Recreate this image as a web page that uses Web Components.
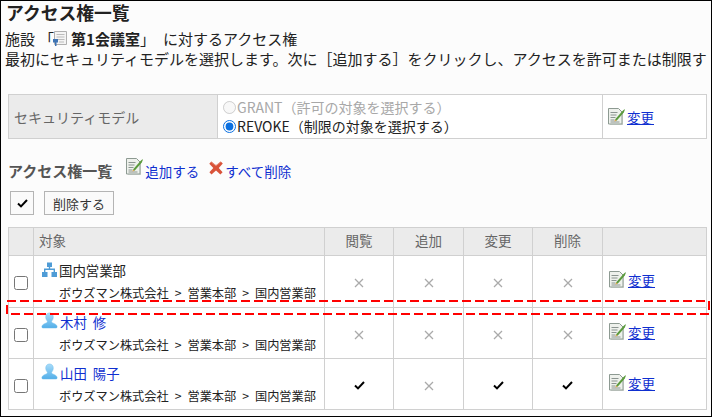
<!DOCTYPE html>
<html lang="ja">
<head>
<meta charset="utf-8">
<title>アクセス権一覧</title>
<style>
  html, body { margin: 0; padding: 0; background: #fff; }
  body { font-family: "Noto Sans CJK JP", "Noto Sans", sans-serif; }
</style>
</head>
<body>
<access-page></access-page>

<script>
const ICONS = {
  edit: `<svg width="17" height="17" viewBox="0 0 17 17">
    <path d="M.5.500h10l3.500 3.500v12H.5z" fill="#eef1ec" stroke="#8d9a92"/>
    <path d="M14.500 5v11.500H2" fill="none" stroke="#b4bcb6"/>
    <path d="M2.500 4.500h7M2.500 7h6M2.500 9.500h5M2.500 12h4M2.500 14h9" stroke="#8b9490"/>
    <path d="M7 11.500 14.200 3.200 16.400 1.200 16.900 1.800 15.800 4.600 8.600 12.800z" fill="#5a9a3c"/>
    <path d="M7 11.500 6.400 13.400 8.600 12.800z" fill="#e0a040"/>
  </svg>`,
  del: `<svg width="14" height="14" viewBox="0 0 14 14">
    <path d="M2.300.600 7 4.200 11.700.400 13.800 2.600 9.800 7 13.600 11.300 11.400 13.400 7 9.600 2.500 13.400.400 11.200 4.300 7 .300 2.700z" fill="#d9533a"/>
    <path d="M2.300 1.100 7 4.700 11.700 1" fill="none" stroke="#e99a86" stroke-width=".8"/>
  </svg>`,
  org: `<svg width="15" height="15" viewBox="0 0 15 15">
    <path d="M5 .5h5v4.500H5zM0 10h5.500v5H0zM9.500 10H15v5H9.500z" fill="#4f9cd6"/>
    <path d="M7.500 4.500v3.200M2.700 10.500V7.300h9.600v3.200" fill="none" stroke="#4f9cd6" stroke-width="1.400"/>
  </svg>`,
  user: `<svg width="17" height="17" viewBox="0 0 18 17">
    <defs><linearGradient id="u" x1="0" y1="0" x2="0" y2="1">
      <stop offset="0" stop-color="#a8dcfa"/><stop offset="1" stop-color="#52aee8"/>
    </linearGradient></defs>
    <path d="M9 .5c2.600 0 4 2 4 4.400 0 1.800-.8 3.300-1.700 4.200-.3.900 0 1.500 1 2 2 .8 4.200 1.600 4.700 3.400.2.900-.2 2-1 2H2c-.8 0-1.200-1.100-1-2 .5-1.800 2.700-2.600 4.700-3.400 1-.5 1.300-1.100 1-2C5.800 8.200 5 6.700 5 4.900 5 2.500 6.400.5 9 .5z" fill="url(#u)" stroke="#6dbdec" stroke-width=".5"/>
  </svg>`,
  room: `<svg width="15" height="16" viewBox="0 0 15 16">
    <path d="M1.500.500h12v13h-12z" fill="#f4f4f4" stroke="#b0b0b0"/>
    <path d="M3.500 3.500h8M3.500 6h8M3.500 8.500h8M6 11h5" stroke="#bcbcbc"/>
    <path d="M0 8h5v3.500H3.500V15H2v-3.500H0z" fill="#3f74b4"/>
  </svg>`,
  check: `<svg width="11" height="9" viewBox="0 0 11 9"><path d="M1 4.500 4 7.400 10 1" fill="none" stroke="#000" stroke-width="2"/></svg>`,
  cross: `<svg width="10" height="10" viewBox="0 0 10 10"><path d="M1 1 9 9M9 1 1 9" fill="none" stroke="#aaa" stroke-width="1.300"/></svg>`
};

class IconLink extends HTMLElement {
  connectedCallback() {
    const icon = this.getAttribute('icon');
    const root = this.attachShadow({ mode: 'open' });
    root.innerHTML = `
      <style>
        :host { display: inline-flex; align-items: flex-end; gap: 2px; color: #0f2fd0; font-size: 13.500px; line-height: 18px; white-space: nowrap; }
        :host([raised]) svg { margin-bottom: 5px; }
        svg { display: block; margin-bottom: 1px; }
        span.u { text-decoration: underline; }
      </style>
      ${ICONS[icon]}<span class="${this.hasAttribute('underline') ? 'u' : ''}"><slot></slot></span>
    `;
  }
}
customElements.define('icon-link', IconLink);

class SecurityModel extends HTMLElement {
  connectedCallback() {
    const root = this.attachShadow({ mode: 'open' });
    root.innerHTML = `
      <style>
        :host { display: block; margin: 0 0 0 8px; width: 699px; }
        table { width: 100%; height: 45px; border-collapse: collapse; table-layout: fixed; font-size: 14px; }
        td { border: 1px solid #d0d0d0; padding: 0; background: #fff; }
        td.label { width: 209px; background: #ebebeb; color: #666; font-size: 14px; padding-left: 5px; box-sizing: border-box; }
        td.action { width: 104px; padding: 3px 0 0 5px; box-sizing: border-box; }
        label { display: flex; align-items: center; height: 19px; color: #222; white-space: nowrap; }
        label.off { color: #a8a8a8; }
        input { margin: 0 1px 0 5px; width: 13px; height: 13px; accent-color: #0a6fe0; }
      </style>
      <table>
        <tr>
          <td class="label">セキュリティモデル</td>
          <td>
            <label class="off"><input type="radio" name="m" disabled>GRANT（許可の対象を選択する）</label>
            <label><input type="radio" name="m" checked>REVOKE（制限の対象を選択する）</label>
          </td>
          <td class="action"><icon-link icon="edit" underline>変更</icon-link></td>
        </tr>
      </table>
    `;
  }
}
customElements.define('security-model', SecurityModel);

const RIGHTS = [
  { icon: 'org', name: '国内営業部', marks: '0000', link: false },
  { icon: 'user', name: '木村 修', marks: '0000', link: true },
  { icon: 'user', name: '山田 陽子', marks: '1011', link: true }
];

class AccessTable extends HTMLElement {
  connectedCallback() {
    const filas = RIGHTS.map(r => `
      <tr>
        <td class="sel"><input type="checkbox"></td>
        <td class="target">
          <div class="name ${r.link ? 'link' : ''} ${r.icon}">${ICONS[r.icon]}<span>${r.name}</span></div>
          <div class="path">ボウズマン株式会社<i>&gt;</i>営業本部<i>&gt;</i>国内営業部</div>
        </td>
        ${[...r.marks].map(m => `<td class="mark">${m === '1' ? ICONS.check : ICONS.cross}</td>`).join('')}
        <td class="action"><icon-link icon="edit" underline>変更</icon-link></td>
      </tr>
    `).join('');

    const root = this.attachShadow({ mode: 'open' });
    root.innerHTML = `
      <style>
        :host { display: block; margin-left: 8px; width: 699px; }
        table { width: 100%; border-collapse: collapse; table-layout: fixed; font-size: 13px; background: #fff; }
        th, td { border: 1px solid #d0d0d0; padding: 0; }
        th { height: 24px; padding-bottom: 3px; background: #ebebeb; color: #666; font-weight: 400; font-size: 13.500px; }
        th.left { text-align: left; padding-left: 5px; }
        tbody tr { height: 51px; }
        tbody tr:first-child { height: 52px; }
        td.sel { text-align: center; }
        td.sel input { margin: 0; width: 14px; height: 14px; accent-color: #666; vertical-align: middle; }
        td.target { padding-left: 7px; }
        .name { display: flex; align-items: center; height: 20px; gap: 2px; font-size: 13.400px; color: #222; margin-top: -1px; word-spacing: 3px; }
        .name.org { padding-left: 1px; }
        .name.link { color: #0f2fd0; }
        .name svg { display: block; margin-top: -2px; }
        .path { font-size: 12.200px; line-height: 18px; margin: 4px 0 0 18px; color: #222; white-space: nowrap; }
        .path i { font-style: normal; margin: 0 6px; }
        td.mark { text-align: center; }
        td.mark svg { vertical-align: middle; }
        td.action { padding-left: 6px; }
      </style>
      <table>
        <colgroup>
          <col style="width:25px"><col style="width:291px"><col style="width:69px"><col style="width:70px"><col style="width:69px"><col style="width:70px"><col>
        </colgroup>
        <thead>
          <tr><th></th><th class="left">対象</th><th>閲覧</th><th>追加</th><th>変更</th><th>削除</th><th></th></tr>
        </thead>
        <tbody>${filas}</tbody>
      </table>
    `;
  }
}
customElements.define('access-table', AccessTable);

class AccessPage extends HTMLElement {
  connectedCallback() {
    const root = this.attachShadow({ mode: 'open' });
    root.innerHTML = `
      <style>
        :host { display: block; position: relative; box-sizing: border-box; width: 712px; height: 417px; overflow: hidden;
          background: #fcfcfc; border: 1px solid #000; color: #222;
          font-family: "Noto Sans CJK JP", "Noto Sans", sans-serif; margin: 0; }
        .inner { margin: 0 0 0 -1px; }
        h1 { margin: 0 0 0 6px; font-size: 17.800px; line-height: 23px; font-weight: 700; color: #222; }
        .lead { margin: 5px 0 0 5px; font-size: 15px; line-height: 20px; white-space: nowrap; height: 40px; overflow: hidden; }
        .lead svg { vertical-align: -2px; margin: 0 3px 0 1px; }
        .lead b { font-weight: 700; }
        .lead .open { margin-left: 4px; margin-right: -2px; }
        .lead .after { margin-left: 8px; }
        .spacer { height: 25px; }
        h2 { margin: 0; font-size: 15px; line-height: 18px; font-weight: 700; color: #555; }
        .bar { display: flex; align-items: flex-end; margin: 17px 0 0 8px; height: 24px; }
        .bar .add { margin-left: 14px; }
        .bar .clear { margin-left: 10px; }
        .tools { display: flex; gap: 10px; margin: 11px 0 0 10px; height: 24px; }
        button { font: inherit; font-size: 13px; background: #fafafa; border: 1px solid #b4b4b4; padding: 0; height: 24px; color: #333; box-sizing: border-box; }
        .all { width: 24px; display: flex; align-items: center; justify-content: center; }
        .delete { width: 70px; }
        .gap { height: 12px; }
        .focus { position: absolute; left: 5px; top: 299px; display: block; }
      </style>
      <div class="inner">
        <h1>アクセス権一覧</h1>
        <div class="lead">施設<span class="open">「</span>${ICONS.room}<b>第1会議室</b>」<span class="after">に対するアクセス権</span><br>最初にセキュリティモデルを選択します。次に［追加する］をクリックし、アクセスを許可または制限す</div>
        <div class="spacer"></div>
        <security-model></security-model>
        <div class="bar">
          <h2>アクセス権一覧</h2>
          <icon-link class="add" icon="edit" raised>追加する</icon-link>
          <icon-link class="clear" icon="del" raised>すべて削除</icon-link>
        </div>
        <div class="tools">
          <button class="all" aria-label="すべて選択">${ICONS.check}</button>
          <button class="delete">削除する</button>
        </div>
        <div class="gap"></div>
        <access-table></access-table>
      </div>
      <svg class="focus" width="704" height="16" viewBox="0 0 704 16">
        <rect x="1" y="1" width="702" height="13" fill="none" stroke="#f00" stroke-width="2" stroke-dasharray="9 4"/>
      </svg>
    `;
  }
}
customElements.define('access-page', AccessPage);
</script>
</body>
</html>
